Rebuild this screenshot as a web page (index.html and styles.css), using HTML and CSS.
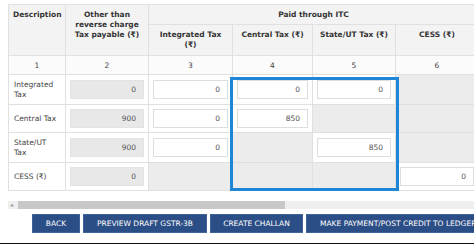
FILE: index.html
```html
<!DOCTYPE html>
<html lang="en">
<head>
  <meta charset="UTF-8">
  <title>Payment of Tax</title>
  <link rel="stylesheet" href="styles.css">
</head>
<body>
  <div class="table-wrap">
    <table class="tax-table">
      <colgroup>
        <col class="c-desc">
        <col class="c-other">
        <col class="c-igst">
        <col class="c-cgst">
        <col class="c-sgst">
        <col class="c-cess">
      </colgroup>
      <thead>
        <tr class="head-1">
          <th rowspan="2" class="top">Description</th>
          <th rowspan="2" class="top">Other than<br>reverse charge<br>Tax payable (₹)</th>
          <th colspan="4">Paid through ITC</th>
        </tr>
        <tr class="head-2">
          <th class="top">Integrated Tax<br>(₹)</th>
          <th class="top">Central Tax (₹)</th>
          <th class="top">State/UT Tax (₹)</th>
          <th class="top">CESS (₹)</th>
        </tr>
        <tr class="num-row">
          <td>1</td>
          <td>2</td>
          <td>3</td>
          <td>4</td>
          <td>5</td>
          <td>6</td>
        </tr>
      </thead>
      <tbody>
        <tr class="row-tall">
          <td class="desc">Integrated<br>Tax</td>
          <td><div class="field locked">0</div></td>
          <td><div class="field">0</div></td>
          <td><div class="field">0</div></td>
          <td><div class="field">0</div></td>
          <td class="off"></td>
        </tr>
        <tr class="row-short">
          <td class="desc">Central Tax</td>
          <td><div class="field locked">900</div></td>
          <td><div class="field">0</div></td>
          <td><div class="field">850</div></td>
          <td class="off"></td>
          <td class="off"></td>
        </tr>
        <tr class="row-tall">
          <td class="desc">State/UT<br>Tax</td>
          <td><div class="field locked">900</div></td>
          <td><div class="field">0</div></td>
          <td class="off"></td>
          <td><div class="field">850</div></td>
          <td class="off"></td>
        </tr>
        <tr class="row-short">
          <td class="desc">CESS (₹)</td>
          <td><div class="field locked">0</div></td>
          <td class="off"></td>
          <td class="off"></td>
          <td class="off"></td>
          <td><div class="field">0</div></td>
        </tr>
      </tbody>
    </table>
    <div class="focus-box"></div>
  </div>

  <div class="hscroll">
    <span class="arrow">&#9666;</span>
    <div class="thumb"></div>
  </div>

  <div class="actions">
    <button class="btn-back">BACK</button>
    <button class="btn-preview">PREVIEW DRAFT GSTR-3B</button>
    <button class="btn-challan">CREATE CHALLAN</button>
    <button class="btn-pay">MAKE PAYMENT/POST CREDIT TO LEDGER</button>
  </div>

  <div class="bottom-bar"></div>
</body>
</html>
```

FILE: styles.css
```css
body {
  font-family: "DejaVu Sans", Verdana, sans-serif;
  background: #fff;
  margin: 0;
  padding: 4px 0 0 8px;
  width: 466px;
  height: 240px;
  overflow: hidden;
  color: #444;
}
.table-wrap {
  position: relative;
  width: 466px;
  overflow: hidden;
}
.tax-table {
  width: 470px;
  table-layout: fixed;
  border-collapse: collapse;
  font-size: 7.5px;
}
.c-desc { width: 57px; }
.c-other { width: 83px; }
.c-igst { width: 84px; }
.c-cgst { width: 80px; }
.c-sgst { width: 83px; }
.c-cess { width: 83px; }

th, td {
  box-sizing: border-box;
  border: 1px solid #e0e0e0;
  padding: 0 4px;
}
th {
  background: #f3f3f3;
  color: #333;
  font-weight: bold;
  text-align: center;
  line-height: 10px;
}
th.top {
  vertical-align: top;
  padding-top: 5px;
}
.head-1 th { height: 20px; }
.head-2 th { height: 31px; }
.num-row td {
  height: 19px;
  text-align: center;
  background: #fbfbfb;
  color: #444;
}
.row-tall td { height: 30px; }
.row-short td { height: 28px; }
td.desc {
  line-height: 10px;
  padding-left: 5px;
  color: #444;
}
td.off {
  background: #ececec;
}
.field {
  height: 19px;
  box-sizing: border-box;
  border: 1px solid #ddd;
  background: #fff;
  text-align: right;
  line-height: 17px;
  padding-right: 7px;
  color: #555;
}
.field.locked {
  background: #e8e8e8;
  border-color: #e3e3e3;
}
.focus-box {
  position: absolute;
  left: 222px;
  top: 73px;
  width: 169px;
  height: 114px;
  box-sizing: border-box;
  border: 3px solid #1f86d6;
}
.hscroll {
  position: relative;
  margin-top: 10px;
  height: 8px;
  background: #efefef;
}
.hscroll .arrow {
  position: absolute;
  left: 2px;
  top: -1px;
  font-size: 6px;
  line-height: 9px;
  color: #999;
}
.hscroll .thumb {
  margin-left: 10px;
  width: 267px;
  height: 8px;
  background: #c8c8c8;
}
.actions {
  display: flex;
  gap: 3px;
  margin: 5px 0 0 24px;
  width: 450px;
}
.actions button {
  flex: none;
  height: 19px;
  padding: 0;
  border: 1px solid #3f629b;
  background: #2c4e86;
  color: #fff;
  font-family: "DejaVu Sans", Verdana, sans-serif;
  font-size: 7.5px;
  white-space: nowrap;
  overflow: hidden;
}
.btn-back { width: 48px; }
.btn-preview { width: 124px; }
.btn-challan { width: 93px; }
.actions .btn-pay {
  width: 180px;
  text-align: left;
  padding-left: 13px;
}
.bottom-bar {
  margin: 10px 0 0 -8px;
  width: 474px;
  height: 6px;
  background: #111;
}
```
